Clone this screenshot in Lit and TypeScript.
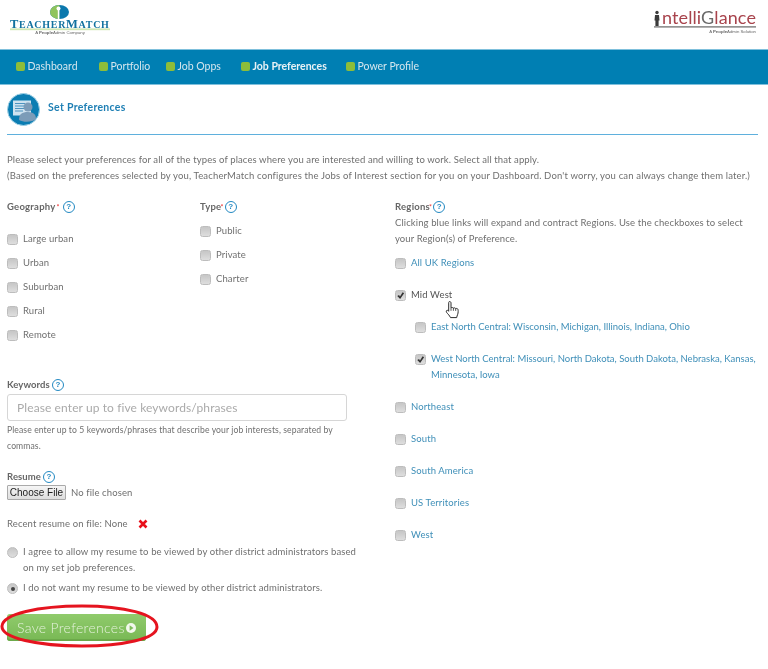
import { LitElement, html, css, svg } from "lit";
import { customElement } from "lit/decorators.js";

const help = html`<span class="help">?</span>`;

const teacherLogo = html`<svg class="logo-l" width="112" height="37" viewBox="0 0 112 37">
  <ellipse cx="59.500" cy="12" rx="9.500" ry="7" fill="#0b78ad"/>
  <path d="M59.500 5 A9.500 7 0 0 0 59.500 19 Z" fill="#8fc45c"/>
  <circle cx="58.500" cy="8.400" r="2" fill="#fff"/>
  <rect x="57.800" y="9" width="1.500" height="10" fill="#fff"/>
  <text x="10" y="27.600" class="tm" textLength="99" lengthAdjust="spacing"><tspan font-size="12.500">T</tspan>EACHER<tspan font-size="12.500">M</tspan>ATCH</text>
  <rect x="10" y="28.400" width="100" height="1.800" fill="#cfe6b4"/>
  <text x="60" y="33.800" class="tag" text-anchor="middle">A <tspan font-weight="700">People</tspan>Admin Company</text>
</svg>`;

const intelliLogo = html`<svg class="logo-r" width="112" height="37" viewBox="0 0 112 37">
  <circle cx="7" cy="12.500" r="1.700" fill="#3a3a3a"/>
  <path d="M5 15h4l.5 5.500h-.9v5.500H5.400v-5.500H4.500z" fill="#3a3a3a"/>
  <text x="12" y="24.400" class="ig" textLength="94" lengthAdjust="spacing"><tspan fill="#a8434c">ntelli</tspan><tspan fill="#6a6a6a">G</tspan><tspan fill="#a8434c">lance</tspan></text>
  <rect x="4" y="26.300" width="102" height="1.200" fill="#666"/>
  <text x="106" y="32.600" class="tag" text-anchor="end">A <tspan font-weight="700">People</tspan>Admin Solution</text>
</svg>`;

const pageIcon = html`<svg width="33" height="33" viewBox="0 0 33 33">
  <circle cx="16.500" cy="16.500" r="16" fill="#0b7db2" stroke="#9fd0e6" stroke-width="1"/>
  <rect x="6" y="7.500" width="18" height="15" fill="#cfe3f0"/>
  <path d="M8 10.500h10M8 13h10M8 15.500h10M8 18h8" stroke="#4d93bf" stroke-width="1"/>
  <circle cx="21" cy="14" r="4.500" fill="#7c9cb8"/>
  <path d="M12 27c0-6 3-8 9-8s8 3 8 7c-3 3-12 4-17 1z" fill="#7c9cb8"/>
</svg>`;

const hand = svg`<path d="M4.500 1.500c1 0 1.500.7 1.500 1.600V7.800c.9-.5 2-.4 2.400.3.800-.5 1.900-.3 2.300.5.900-.4 2-.1 2.300.9.300 1 .2 3.300-.3 4.800-.4 1.200-1 2.300-1 3.300H5.500c-.4-1-1.200-2-2.300-3.400C2.300 13.500 1 12 1.300 11c.3-.9 1.400-.9 2.200-.1l.2.300V3.100c0-1 .3-1.600.8-1.600Z" fill="#fff" stroke="#2b2b2b" stroke-width="1" stroke-linejoin="round"/>
<path d="M6 7.800v3M8.400 8.100v2.700M10.700 8.600v2.300" stroke="#2b2b2b" stroke-width=".8" fill="none"/>`;

const NAV = [
  { label: "Dashboard", width: 83 },
  { label: "Portfolio", width: 67 },
  { label: "Job Opps", width: 75 },
  { label: "Job Preferences", width: 105, active: true },
  { label: "Power Profile", width: 90 },
];

@customElement("app-root")
export class AppRoot extends LitElement {
  static styles = css`
    :host {
      display: block;
      position: relative;
      width: 768px;
      height: 669px;
      overflow: hidden;
      background: #fff;
      font-family: "Lato", "Open Sans", sans-serif;
      font-size: 9.500px;
      line-height: 16px;
      letter-spacing: 0.11px;
      color: #6f6f6f;
      filter: blur(0.35px);
    }
    .top {
      height: 49px;
      display: flex;
      justify-content: space-between;
      align-items: flex-start;
    }
    .logo-r { margin-right: 6px; }
    .tm { font-family: "Liberation Serif", serif; font-size: 10px; fill: #11719f; font-weight: 700; }
    .tag { font-family: "Liberation Sans", sans-serif; font-size: 4.300px; fill: #666; letter-spacing: 0; }
    .ig { font-family: "Lato", sans-serif; font-weight: 400; font-size: 18px; }
    nav {
      height: 36px;
      box-sizing: border-box;
      background: #007fb3;
      border-top: 1px solid #7fc0dc;
      border-bottom: 1px solid #7fc0dc;
      display: flex;
      align-items: center;
      padding: 0 0 2px 16px;
      color: #d4e6ee;
      font-size: 10.500px;
      letter-spacing: 0;
    }
    .nav-item { display: flex; align-items: center; gap: 2.500px; flex: none; }
    .nav-item.active { font-weight: 700; color: #e8f2f6; }
    .sq { width: 9px; height: 9px; border-radius: 2px; background: #8dbd3a; }
    main { padding: 0 10px 0 7px; }
    .title {
      height: 50px;
      box-sizing: border-box;
      border-bottom: 1px solid #5fb0dd;
      display: flex;
      align-items: flex-start;
      gap: 8px;
      padding-top: 8px;
      color: #1e7fb4;
      font-weight: 700;
      font-size: 10.500px;
      letter-spacing: 0.3px;
    }
    .title span { margin-top: 6px; }
    .intro { margin: 17px 0 15px; white-space: nowrap; }
    .intro p { margin: 0; }
    .intro p + p { letter-spacing: 0.16px; }
    .cols { display: grid; grid-template-columns: 388px 1fr; }
    .filters { display: grid; grid-template-columns: 193px 1fr; height: 144px; }
    .label { font-weight: 700; color: #666; display: flex; align-items: center; gap: 3px; letter-spacing: 0.25px; }
    .label.tight { gap: 1px; }
    .label.short { gap: 2px; letter-spacing: 0.1px; }
    sup { color: #e33; font-size: 7px; line-height: 0; margin-left: -2px; font-weight: 400; }
    .help {
      width: 12px;
      height: 12px;
      box-sizing: border-box;
      border: 1.500px solid #2389c2;
      border-radius: 50%;
      color: #2389c2;
      font: 700 8px/9px "Liberation Sans", sans-serif;
      text-align: center;
      letter-spacing: 0;
    }
    .opts { display: flex; flex-direction: column; gap: 8px; }
    .opts.geo { margin-top: 16px; }
    .opts.type { margin-top: 8px; }
    .row { display: flex; align-items: flex-start; gap: 5px; }
    input[type="checkbox"], input[type="radio"] {
      appearance: none;
      margin: 3px 0 0;
      width: 11px;
      height: 11px;
      box-sizing: border-box;
      border: 1px solid #bdbdbd;
      border-radius: 2.500px;
      background: linear-gradient(#c6c6c6, #dedede);
      flex: none;
      position: relative;
    }
    input[type="radio"] { border-radius: 50%; }
    input[type="radio"]:checked::before {
      content: "";
      position: absolute;
      left: 2.500px;
      top: 2.500px;
      width: 4px;
      height: 4px;
      border-radius: 50%;
      background: #444;
    }
    input[type="checkbox"]:checked::before {
      content: "";
      position: absolute;
      inset: 0;
      background: #333;
      clip-path: polygon(14% 55%, 34% 45%, 44% 60%, 74% 14%, 90% 24%, 46% 88%);
    }
    .keywords { margin-top: 34px; width: 345px; }
    .kw-input {
      display: block;
      width: 340px;
      height: 27px;
      margin-top: 1px;
      box-sizing: border-box;
      border: 1px solid #d6d6d6;
      border-radius: 3px;
      padding: 0 9px;
      background: #fff;
      font-family: inherit;
      font-size: 12px;
      letter-spacing: 0.1px;
      color: #aaa;
      outline: none;
    }
    .kw-input::placeholder { color: #aaa; opacity: 1; }
    .hint { margin: 1px 0 0; font-size: 8.600px; letter-spacing: 0.1px; width: 345px; }
    .resume { margin-top: 15px; }
    .file { display: flex; align-items: center; gap: 5px; height: 15px; }
    .choose {
      width: 59px;
      height: 15px;
      box-sizing: border-box;
      padding: 0;
      border: 1px solid #aaa;
      border-radius: 1px;
      background: linear-gradient(#f6f6f6, #dedede);
      color: #222;
      font: 10px/13px "Liberation Sans", sans-serif;
      letter-spacing: 0;
    }
    .recent { margin: 16px 0 0; display: flex; align-items: center; gap: 10px; }
    .cross { display: block; }
    .radios { margin-top: 12px; width: 350px; display: flex; flex-direction: column; gap: 4px; }
    .save-wrap { position: relative; width: 139px; margin-top: 18px; }
    .save {
      width: 139px;
      height: 27px;
      padding: 0 0 0 10px;
      box-sizing: border-box;
      border: 0;
      border-radius: 3px;
      background: linear-gradient(#90cb6c, #78b854);
      box-shadow: inset 0 -2px 0 #6ca94a;
      color: #e4f1da;
      font: 300 14px/25px "Lato", sans-serif;
      letter-spacing: 0.3px;
      display: flex;
      align-items: center;
    }
    .play { display: block; margin-left: 1px; }
    .ring { position: absolute; left: -7px; top: -11px; pointer-events: none; }
    .regions-help { margin: 0 0 8px; width: 355px; }
    .regions { display: flex; flex-direction: column; gap: 16px; }
    a { color: #3f8fb8; text-decoration: none; }
    .dark { color: #555; }
    .sub { padding-left: 20px; }
    .sub a { display: block; width: 332px; letter-spacing: 0; }
    .hand { position: absolute; left: 445px; top: 300px; }
  `;

  private check(label: string, checked = false) {
    return html`<label class="row"><input type="checkbox" .checked=${checked} /><span>${label}</span></label>`;
  }

  private region(label: string, checked = false, sub = false) {
    return html`<div class="row ${sub ? "sub" : ""}">
      <input type="checkbox" .checked=${checked} />
      <a href="#">${label}</a>
    </div>`;
  }

  render() {
    return html`
      <header class="top">${teacherLogo}${intelliLogo}</header>
      <nav>
        ${NAV.map(
          (n) => html`<div class="nav-item ${n.active ? "active" : ""}" style="width:${n.width}px"><i class="sq"></i>${n.label}</div>`
        )}
      </nav>
      <main>
        <div class="title">${pageIcon}<span>Set Preferences</span></div>
        <div class="intro">
          <p>Please select your preferences for all of the types of places where you are interested and willing to work. Select all that apply.</p>
          <p>(Based on the preferences selected by you, TeacherMatch configures the Jobs of Interest section for you on your Dashboard. Don't worry, you can always change them later.)</p>
        </div>
        <div class="cols">
          <section>
            <div class="filters">
              <div>
                <div class="label">Geography<sup>*</sup>${help}</div>
                <div class="opts geo">
                  ${["Large urban", "Urban", "Suburban", "Rural", "Remote"].map((l) => this.check(l))}
                </div>
              </div>
              <div>
                <div class="label tight">Type<sup>*</sup>${help}</div>
                <div class="opts type">
                  ${["Public", "Private", "Charter"].map((l) => this.check(l))}
                </div>
              </div>
            </div>
            <div class="keywords">
              <div class="label short">Keywords ${help}</div>
              <input class="kw-input" placeholder="Please enter up to five keywords/phrases" />
              <p class="hint">Please enter up to 5 keywords/phrases that describe your job interests, separated by commas.</p>
            </div>
            <div class="resume">
              <div class="label short">Resume ${help}</div>
              <div class="file"><button class="choose">Choose File</button><span>No file chosen</span></div>
            </div>
            <div class="recent">
              <span>Recent resume on file: None</span>
              <svg class="cross" width="10" height="10" viewBox="0 0 10 10"><path d="M1.500 1.500l7 7M8.500 1.500l-7 7" stroke="#e8101a" stroke-width="2.600"/></svg>
            </div>
            <div class="radios">
              <label class="row"><input type="radio" name="share" /><span>I agree to allow my resume to be viewed by other district administrators based on my set job preferences.</span></label>
              <label class="row"><input type="radio" name="share" checked /><span>I do not want my resume to be viewed by other district administrators.</span></label>
            </div>
            <div class="save-wrap">
              <button class="save">Save Preferences<svg class="play" width="10" height="10" viewBox="0 0 10 10"><circle cx="5" cy="5" r="5" fill="#f2f8ec"/><path d="M3.600 2.300 7.500 5 3.600 7.700z" fill="#7fbd5b"/></svg></button>
              <svg class="ring" width="160" height="46" viewBox="0 0 160 46">
                <path d="M2 23C3 11 38 3 82 3c42 0 75 8 75 21 0 12-35 19-75 19C38 43 1 35 2 23Z" fill="none" stroke="#e5141f" stroke-width="3"/>
              </svg>
            </div>
          </section>
          <section>
            <div class="label tight">Regions<sup>*</sup>${help}</div>
            <p class="regions-help">Clicking blue links will expand and contract Regions. Use the checkboxes to select your Region(s) of Preference.</p>
            <div class="regions">
              ${this.region("All UK Regions")}
              <div class="row"><input type="checkbox" checked /><span class="dark">Mid West</span></div>
              ${this.region("East North Central: Wisconsin, Michigan, Illinois, Indiana, Ohio", false, true)}
              ${this.region("West North Central: Missouri, North Dakota, South Dakota, Nebraska, Kansas, Minnesota, Iowa", true, true)}
              ${["Northeast", "South", "South America", "US Territories", "West"].map((r) => this.region(r))}
            </div>
          </section>
        </div>
      </main>
      <svg class="hand" width="15" height="20" viewBox="0 0 15 20">${hand}</svg>
    `;
  }
}
